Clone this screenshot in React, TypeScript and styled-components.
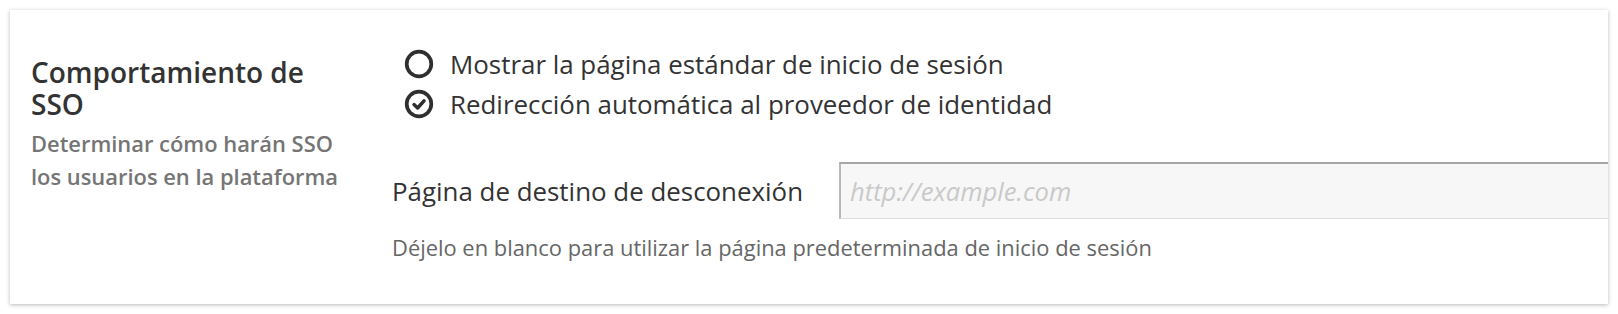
import React from "react";
import styled, { createGlobalStyle } from "styled-components";

const Global = createGlobalStyle`
  html, body { margin: 0; padding: 0; background: #ffffff; }
  body { font-family: "Open Sans", "Noto Sans", Arial, sans-serif; }
  * { box-sizing: border-box; }
`;

const Page = styled.div`
  padding: 10px;
  width: 1618px;
  height: 314px;
`;

const Card = styled.section`
  background: #fff;
  box-shadow: 0 1px 4px rgba(0, 0, 0, 0.28);
  overflow: hidden;
  height: 294px;
  display: grid;
  grid-template-columns: 361px 1fr;
  align-items: start;
  padding: 46px 0 0 21px;
`;

const Intro = styled.div`
  display: flex;
  flex-direction: column;
  gap: 7px;
`;

const Heading = styled.h2`
  margin: 0;
  font-size: 28px;
  line-height: 32px;
  font-weight: 600;
  color: #333;
  width: 320px;
`;

const Description = styled.p`
  margin: 0;
  font-size: 21.9px;
  line-height: 33px;
  font-weight: 600;
  color: #757575;
`;

const Settings = styled.div`
  display: flex;
  flex-direction: column;
  margin-top: -12px;
`;

const RadioGroup = styled.div`
  display: flex;
  flex-direction: column;
  padding-left: 12px;
`;

const RadioRow = styled.label`
  display: flex;
  align-items: center;
  gap: 16px;
  height: 40px;
  font-size: 25.9px;
  color: #333;
`;

const FieldRow = styled.div`
  display: flex;
  align-items: center;
  margin-top: 38px;
`;

const FieldLabel = styled.span`
  width: 447px;
  font-size: 25.9px;
  color: #333;
`;

const Input = styled.input`
  flex: 1;
  height: 57px;
  margin-right: -4px;
  background: #f7f7f7;
  border: 1px solid #ddd;
  border-top: 2px solid #a6a6a6;
  border-left: 2px solid #b8b8b8;
  padding: 0 9px;
  font-family: "Open Sans", "Noto Sans", Arial, sans-serif;
  font-size: 25.6px;
  color: #333;
  outline: none;
  &::placeholder {
    color: #c9c9c9;
    font-style: italic;
  }
`;

const Help = styled.p`
  margin: 14px 0 0;
  font-size: 21.9px;
  line-height: 30px;
  color: #666;
`;

const RadioIcon = ({ checked }: { checked?: boolean }) => (
  <svg width="30" height="30" viewBox="0 0 30 30" fill="none">
    <circle cx="15" cy="15" r="12.3" stroke="#2f2f2f" strokeWidth="3.7" />
    {checked && (
      <path
        d="M10 15.6 L13.6 19 L20 11.8"
        stroke="#2f2f2f"
        strokeWidth="3.5"
        strokeLinecap="round"
        strokeLinejoin="round"
      />
    )}
  </svg>
);

export default function App() {
  return (
    <>
      <Global />
      <Page>
        <Card>
          <Intro>
            <Heading>Comportamiento de SSO</Heading>
            <Description>
              Determinar cómo harán SSO
              <br />
              los usuarios en la plataforma
            </Description>
          </Intro>
          <Settings>
            <RadioGroup>
              <RadioRow>
                <RadioIcon />
                Mostrar la página estándar de inicio de sesión
              </RadioRow>
              <RadioRow>
                <RadioIcon checked />
                Redirección automática al proveedor de identidad
              </RadioRow>
            </RadioGroup>
            <FieldRow>
              <FieldLabel>Página de destino de desconexión</FieldLabel>
              <Input placeholder="http://example.com" />
            </FieldRow>
            <Help>Déjelo en blanco para utilizar la página predeterminada de inicio de sesión</Help>
          </Settings>
        </Card>
      </Page>
    </>
  );
}
